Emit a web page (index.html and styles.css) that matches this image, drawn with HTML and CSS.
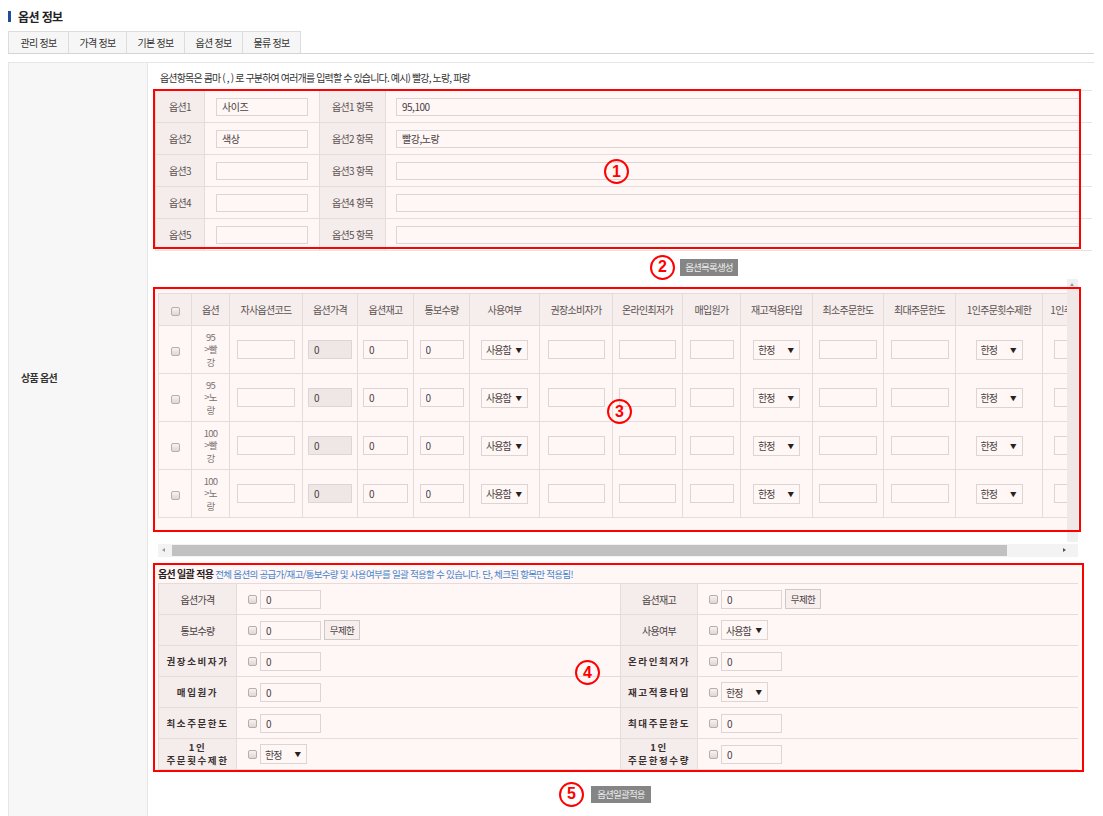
FILE: index.html
```html
<!DOCTYPE html>
<html lang="ko">
<head>
<meta charset="utf-8">
<title>옵션 정보</title>
<link rel="stylesheet" href="styles.css">
</head>
<body>
<div class="page">
  <h2 class="title">옵션 정보</h2>
  <div class="tabs">
    <span class="tab first">관리 정보</span>
    <span class="tab">가격 정보</span>
    <span class="tab">기본 정보</span>
    <span class="tab">옵션 정보</span>
    <span class="tab">물류 정보</span>
  </div>

  <div class="main">
    <div class="side"><span>상품 옵션</span></div>
    <div class="content">
      <p class="desc">옵션항목은 콤마 ( , ) 로 구분하여 여러개를 입력할 수 있습니다. 예시) 빨강, 노랑, 파랑</p>

      <div class="box1">
        <table class="opt">
          <colgroup><col class="oc1"><col class="oc2"><col class="oc3"><col></colgroup>
          <tr><th>옵션1</th><td><input class="in name" value="사이즈"></td><th>옵션1 항목</th><td><input class="in items" value="95,100"></td></tr>
          <tr><th>옵션2</th><td><input class="in name" value="색상"></td><th>옵션2 항목</th><td><input class="in items" value="빨강,노랑"></td></tr>
          <tr><th>옵션3</th><td><input class="in name" value=""></td><th>옵션3 항목</th><td><input class="in items" value=""></td></tr>
          <tr><th>옵션4</th><td><input class="in name" value=""></td><th>옵션4 항목</th><td><input class="in items" value=""></td></tr>
          <tr><th>옵션5</th><td><input class="in name" value=""></td><th>옵션5 항목</th><td><input class="in items" value=""></td></tr>
        </table>
        <div class="mark mark1"><span class="num num1">1</span></div>
      </div>

      <div class="btn-row row2"><span class="num">2</span><button class="gbtn">옵션목록생성</button></div>

      <div class="grid-frame">
        <div class="grid-view">
          <div class="grid-area">
            <table class="grid">
              <colgroup>
                <col style="width:33px"><col style="width:38px"><col style="width:73px"><col style="width:55px"><col style="width:56px"><col style="width:56px"><col style="width:70px"><col style="width:73px"><col style="width:70px"><col style="width:58px"><col style="width:72px"><col style="width:71px"><col style="width:72px"><col style="width:87px"><col style="width:80px">
              </colgroup>
              <thead>
                <tr><th><input type="checkbox" class="cb"></th><th>옵션</th><th>자사옵션코드</th><th>옵션가격</th><th>옵션재고</th><th>통보수량</th><th>사용여부</th><th>권장소비자가</th><th>온라인최저가</th><th>매입원가</th><th>재고적용타입</th><th>최소주문한도</th><th>최대주문한도</th><th>1인주문횟수제한</th><th>1인주문한정수량</th></tr>
              </thead>
              <tbody>
                <tr><td><input type="checkbox" class="cb"></td><td class="oname"><span>95</span><span>&gt;빨</span><span>강</span></td><td><input class="in w58"></td><td><input class="in w44 ro" value="0"></td><td><input class="in w45" value="0"></td><td><input class="in w44" value="0"></td><td><span class="sel">사용함<i>▼</i></span></td><td><input class="in w57"></td><td><input class="in w57"></td><td><input class="in w44"></td><td><span class="sel">한정<i>▼</i></span></td><td><input class="in w58"></td><td><input class="in w58"></td><td><span class="sel">한정<i>▼</i></span></td><td><input class="in w58"></td></tr>
                <tr><td><input type="checkbox" class="cb"></td><td class="oname"><span>95</span><span>&gt;노</span><span>랑</span></td><td><input class="in w58"></td><td><input class="in w44 ro" value="0"></td><td><input class="in w45" value="0"></td><td><input class="in w44" value="0"></td><td><span class="sel">사용함<i>▼</i></span></td><td><input class="in w57"></td><td><input class="in w57"></td><td><input class="in w44"></td><td><span class="sel">한정<i>▼</i></span></td><td><input class="in w58"></td><td><input class="in w58"></td><td><span class="sel">한정<i>▼</i></span></td><td><input class="in w58"></td></tr>
                <tr><td><input type="checkbox" class="cb"></td><td class="oname"><span>100</span><span>&gt;빨</span><span>강</span></td><td><input class="in w58"></td><td><input class="in w44 ro" value="0"></td><td><input class="in w45" value="0"></td><td><input class="in w44" value="0"></td><td><span class="sel">사용함<i>▼</i></span></td><td><input class="in w57"></td><td><input class="in w57"></td><td><input class="in w44"></td><td><span class="sel">한정<i>▼</i></span></td><td><input class="in w58"></td><td><input class="in w58"></td><td><span class="sel">한정<i>▼</i></span></td><td><input class="in w58"></td></tr>
                <tr><td><input type="checkbox" class="cb"></td><td class="oname"><span>100</span><span>&gt;노</span><span>랑</span></td><td><input class="in w58"></td><td><input class="in w44 ro" value="0"></td><td><input class="in w45" value="0"></td><td><input class="in w44" value="0"></td><td><span class="sel">사용함<i>▼</i></span></td><td><input class="in w57"></td><td><input class="in w57"></td><td><input class="in w44"></td><td><span class="sel">한정<i>▼</i></span></td><td><input class="in w58"></td><td><input class="in w58"></td><td><span class="sel">한정<i>▼</i></span></td><td><input class="in w58"></td></tr>
              </tbody>
            </table>
          </div>
          <div class="vscroll"><span class="arr-up"></span></div>
        </div>
        <div class="hscroll"><span class="arr-left"></span><span class="thumb"></span><span class="arr-right"></span></div>
        <div class="mark mark3"><span class="num num3">3</span></div>
      </div>

      <div class="bulk">
        <div class="bulk-title"><b>옵션 일괄 적용</b> <span class="blue">전체 옵션의 공급가/재고/통보수량 및 사용여부를 일괄 적용할 수 있습니다. 단, 체크된 항목만 적용됨!</span></div>
        <table class="btable">
          <colgroup><col class="bc1"><col class="bc2"><col class="bc3"><col></colgroup>
          <tr>
            <th>옵션가격</th><td><span class="val"><input type="checkbox" class="cb"><input class="in w61" value="0"></span></td>
            <th>옵션재고</th><td><span class="val"><input type="checkbox" class="cb"><input class="in w61" value="0"><button class="wbtn">무제한</button></span></td>
          </tr>
          <tr>
            <th>통보수량</th><td><span class="val"><input type="checkbox" class="cb"><input class="in w61" value="0"><button class="wbtn">무제한</button></span></td>
            <th>사용여부</th><td><span class="val"><input type="checkbox" class="cb"><span class="sel">사용함<i>▼</i></span></span></td>
          </tr>
          <tr>
            <th class="sp">권장소비자가</th><td><span class="val"><input type="checkbox" class="cb"><input class="in w61" value="0"></span></td>
            <th class="sp">온라인최저가</th><td><span class="val"><input type="checkbox" class="cb"><input class="in w61" value="0"></span></td>
          </tr>
          <tr>
            <th class="sp">매입원가</th><td><span class="val"><input type="checkbox" class="cb"><input class="in w61" value="0"></span></td>
            <th class="sp">재고적용타입</th><td><span class="val"><input type="checkbox" class="cb"><span class="sel">한정<i>▼</i></span></span></td>
          </tr>
          <tr>
            <th class="sp">최소주문한도</th><td><span class="val"><input type="checkbox" class="cb"><input class="in w61" value="0"></span></td>
            <th class="sp">최대주문한도</th><td><span class="val"><input type="checkbox" class="cb"><input class="in w61" value="0"></span></td>
          </tr>
          <tr>
            <th class="sp two"><span>1인</span><span>주문횟수제한</span></th><td><span class="val"><input type="checkbox" class="cb"><span class="sel">한정<i>▼</i></span></span></td>
            <th class="sp two"><span>1인</span><span>주문한정수량</span></th><td><span class="val"><input type="checkbox" class="cb"><input class="in w61" value="0"></span></td>
          </tr>
        </table>
        <div class="mark mark4"><span class="num num4">4</span></div>
      </div>

      <div class="btn-row row5"><span class="num">5</span><button class="gbtn">옵션일괄적용</button></div>
    </div>
  </div>
</div>
</body>
</html>
```

FILE: styles.css
```css
* { box-sizing: border-box; }
html, body { margin: 0; background: #fff; }
body {
  font-family: "Noto Sans CJK KR", "Noto Sans", sans-serif;
  font-size: 10px;
  color: #333;
  letter-spacing: -0.7px;
  overflow: hidden;
}
.page { padding: 8px 9px 0 8px; }

.title {
  margin: 0;
  height: 17px;
  display: flex;
  align-items: center;
  gap: 7px;
  font-size: 12px;
  font-weight: 700;
  color: #222;
  letter-spacing: -0.6px;
}
.title::before { content: ""; width: 3px; height: 11px; background: #1f4e9e; }

.tabs { display: flex; margin-top: 6px; border-bottom: 1px solid #d4d4d4; }
.tab {
  width: 59px;
  height: 22px;
  border: 1px solid #dcdcdc;
  border-bottom: 0;
  background: #f6f6f6;
  display: flex;
  align-items: center;
  justify-content: center;
  font-size: 10px;
  color: #333;
  margin-right: -1px;
}
.tab.first { width: 61px; }

.main { display: flex; margin-top: 8px; border-top: 1px solid #e6e6e6; min-height: 760px; }
.side {
  width: 140px;
  flex: none;
  background: #f7f7f7;
  border-left: 1px solid #e6e6e6;
  border-right: 1px solid #e6e6e6;
  padding: 307px 0 0 12px;
  font-weight: 700;
  color: #333;
}
.content { flex: 1; padding: 0 2px 0 7px; min-width: 0; }

.desc { margin: 0 0 5px; padding: 8px 0 0 5px; line-height: 14px; color: #333; letter-spacing: -0.85px; }

/* annotation overlays */
.mark {
  position: absolute;
  border: 2px solid #f00;
  background: rgba(255, 0, 0, 0.035);
  pointer-events: none;
}
.num {
  width: 25px;
  height: 25px;
  border: 2.5px solid #f00;
  border-radius: 50%;
  color: #f00;
  font: 700 16px/20px "Liberation Sans", Arial, sans-serif;
  letter-spacing: 0;
  display: flex;
  align-items: center;
  justify-content: center;
  flex: none;
}
.mark .num { position: absolute; }

/* box 1 */
.box1 { position: relative; }
.opt { width: 937px; border-collapse: collapse; table-layout: fixed; }
.opt .oc1 { width: 49px; }
.opt .oc2 { width: 115px; }
.opt .oc3 { width: 66px; }
.opt th, .opt td { height: 32px; border-top: 1px solid #e4e4e4; border-bottom: 1px solid #e4e4e4; padding: 0; }
.opt th { background: #f5f5f5; font-weight: 400; color: #555; text-align: center; border-right: 1px solid #e4e4e4; border-left: 1px solid #e4e4e4; }
.opt td { background: #fff; }
.in {
  height: 19px;
  border: 1px solid #dcdcdc;
  background: #fff;
  font-family: inherit;
  font-size: 10px;
  letter-spacing: -0.5px;
  color: #444;
  padding: 0 5px;
  margin: 0;
  vertical-align: middle;
  outline: none;
}
.opt .name { width: 92px; height: 18px; margin-left: 11px; }
.opt .items { width: 684px; height: 18px; margin-left: 10px; }
.mark1 { left: -2px; top: -1px; width: 928px; height: 160px; }
.num1 { left: 449px; top: 68px; }

/* buttons */
.btn-row { display: flex; align-items: center; gap: 5px; height: 24px; }
.row2 { margin-top: 4px; padding-left: 495px; }
.row5 { margin-top: 10px; padding-left: 404px; gap: 7px; }
.gbtn {
  height: 17px;
  padding: 0 3px;
  border: 0;
  background: #858585;
  color: #eee;
  font-family: inherit;
  font-size: 9.5px;
  letter-spacing: -0.8px;
  line-height: 17px;
}
.row2 .gbtn { width: 58px; }
.row5 .gbtn { width: 60px; }

/* grid */
.grid-frame { position: relative; width: 923px; }
.grid-view { display: flex; height: 263px; }
.grid-area { width: 912px; overflow: hidden; padding: 14px 0 0 3px; }
.grid { border-collapse: collapse; table-layout: fixed; width: 964px; }
.grid th, .grid td {
  border: 1px solid #e6e3e3;
  text-align: center;
  padding: 0;
  font-weight: 400;
  color: #555;
  white-space: nowrap;
}
.grid th { height: 32px; background: #f6f6f6; }
.grid td { height: 48px; background: #fff; }
.grid .oname { color: #777; font-size: 9.5px; }
.grid .oname span { display: block; line-height: 12.5px; height: 12.5px; }
.w58 { width: 58px; }
.w57 { width: 57px; }
.w45 { width: 45px; }
.w44 { width: 44px; }
.w61 { width: 61px; }
.in.ro { background: #efefef; }
.cb {
  -webkit-appearance: none;
  appearance: none;
  width: 9px;
  height: 9px;
  margin: 0;
  border: 1px solid #b4b4b4;
  border-radius: 2px;
  background: linear-gradient(#fafafa, #dedede);
  vertical-align: middle;
}
.sel {
  display: inline-flex;
  align-items: center;
  justify-content: space-between;
  width: 47px;
  height: 20px;
  border: 1px solid #dcdcdc;
  background: #fff;
  padding: 0 5px 0 4px;
  color: #444;
  letter-spacing: -1px;
  vertical-align: middle;
}
.sel i { font-style: normal; font-size: 6.5px; color: #222; letter-spacing: 0; margin-left: 3px; }

.vscroll { width: 11px; background: #f0f0f0; position: relative; }
.arr-up {
  position: absolute; left: 3px; top: 4px;
  border-left: 2.5px solid transparent; border-right: 2.5px solid transparent; border-bottom: 3px solid #999;
}
.hscroll {
  margin: 2px 0 0 3px;
  width: 920px;
  height: 13px;
  background: #f3f3f3;
  display: flex;
  align-items: center;
  position: relative;
}
.hscroll .thumb { position: absolute; left: 14px; top: 1px; width: 835px; height: 11px; background: #c1c1c1; }
.arr-left {
  position: absolute; left: 4px; top: 4px;
  border-top: 2.5px solid transparent; border-bottom: 2.5px solid transparent; border-right: 3px solid #999;
}
.arr-right {
  position: absolute; left: 905px; top: 4px;
  border-top: 2.5px solid transparent; border-bottom: 2.5px solid transparent; border-left: 3px solid #555;
}
.mark3 { left: -2px; top: 8px; width: 928px; height: 245px; }
.num3 { left: 452px; top: 110px; }

/* bulk */
.bulk { position: relative; margin: 6px 0 0 -2px; width: 931px; padding: 2px 6px 2px 5px; }
.bulk-title { height: 18px; line-height: 18px; font-size: 10px; }
.bulk-title b { color: #222; }
.bulk-title .blue { color: #3b8ad6; font-size: 9.5px; }
.btable { width: 920px; border-collapse: collapse; table-layout: fixed; }
.btable .bc1 { width: 78px; }
.btable .bc2 { width: 384px; }
.btable .bc3 { width: 77px; }
.btable th, .btable td { height: 31px; border-top: 1px solid #e6e3e3; border-bottom: 1px solid #e6e3e3; padding: 0; }
.btable th {
  background: #f5f5f5;
  font-weight: 400;
  color: #444;
  text-align: center;
  border-right: 1px solid #e6e3e3;
  border-left: 1px solid #e6e3e3;
}
.btable th.sp { font-weight: 700; letter-spacing: 1.6px; font-size: 9.5px; color: #333; }
.btable th.two span { display: block; line-height: 13px; height: 13px; }
.btable td { background: #fff; }
.val { display: flex; align-items: center; gap: 3px; padding-left: 11px; }
.wbtn {
  height: 20px;
  width: 36px;
  padding: 0;
  border: 1px solid #cfcfcf;
  background: #f7f7f7;
  color: #444;
  font-family: inherit;
  font-size: 9.5px;
  letter-spacing: -0.6px;
}
.mark4 { left: 0; top: 0; width: 931px; height: 209px; }
.num4 { left: 420px; top: 95px; }
```
